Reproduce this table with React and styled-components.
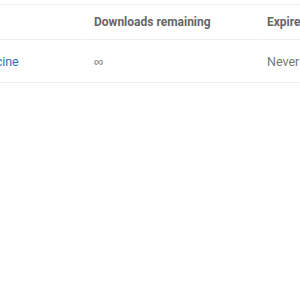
import React from "react"
import styled, { createGlobalStyle } from "styled-components"

const Global = createGlobalStyle`
  body {
    margin: 0;
    background: #fff;
    font-family: Roboto, "Liberation Sans", sans-serif;
  }
`

const Viewport = styled.div`
  width: 300px;
  height: 300px;
  overflow: hidden;
  padding-top: 4px;
  box-sizing: border-box;
`

const Table = styled.table`
  margin-left: -42px;
  border-collapse: separate;
  border-spacing: 0;
  border-top: 1px solid #eeeeee;
  width: 420px;
  table-layout: fixed;
`

const Th = styled.th`
  box-sizing: border-box;
  text-align: left;
  font-size: 12px;
  font-weight: 700;
  color: #666;
  height: 35px;
  padding: 0 10px;
  border-bottom: 1px solid #eeeeee;
  border-right: 2px solid #fff;
  width: ${({ $w }) => $w}px;
  white-space: nowrap;
`

const Td = styled.td`
  box-sizing: border-box;
  font-size: 12.5px;
  color: #777;
  height: 43px;
  padding: 0 10px;
  border-bottom: 1px solid #eeeeee;
  white-space: nowrap;
`

const Link = styled.a`
  color: #1e73be;
  text-decoration: none;
`

const Infinity = styled.span`
  font-family: "Liberation Sans", sans-serif;
  font-size: 13px;
  color: #777;
`

const columns = [
  { label: "Product", w: 126, hidden: true },
  { label: "Downloads remaining", w: 173 },
  { label: "Expires", w: 121 },
]

const App = () => {
  return <>
    <Global />
    <Viewport>
      <Table>
        <thead>
          <tr>
            {columns.map(c => <Th key={c.label} $w={c.w}>{c.hidden ? "" : c.label}</Th>)}
          </tr>
        </thead>
        <tbody>
          <tr>
            <Td><Link href="#">Medicine</Link></Td>
            <Td><Infinity>∞</Infinity></Td>
            <Td>Never</Td>
          </tr>
        </tbody>
      </Table>
    </Viewport>
  </>
}

export default App
